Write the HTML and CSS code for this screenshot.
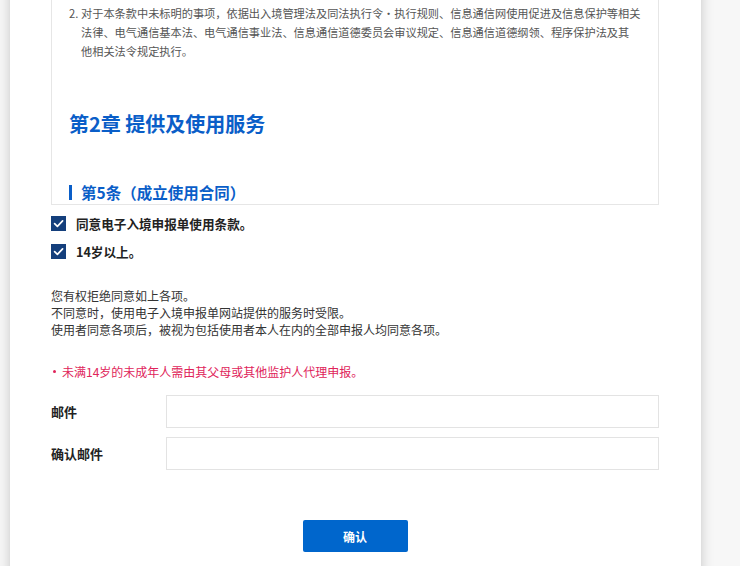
FILE: index.html
```html
<!DOCTYPE html>
<html lang="zh-CN">
<head>
<meta charset="utf-8">
<title>电子入境申报单</title>
<link rel="stylesheet" href="styles.css">
</head>
<body>
<div class="card">
  <div class="terms">
    <div class="item">
      <span class="num">2.</span>
      <span class="item-text">对于本条款中未标明的事项，依据出入境管理法及同法执行令·执行规则、信息通信网使用促进及信息保护等相关<br>法律、电气通信基本法、电气通信事业法、信息通信道德委员会审议规定、信息通信道德纲领、程序保护法及其<br>他相关法令规定执行。</span>
    </div>
    <h2 class="chapter">第2章 提供及使用服务</h2>
    <h3 class="article">第5条（成立使用合同）</h3>
  </div>

  <div class="checks">
    <label class="check-row">
      <span class="box"><svg width="15" height="15" viewBox="0 0 15 15"><path d="M3.6 7.6 L6.4 10.3 L11.6 4.9" fill="none" stroke="#fff" stroke-width="1.7" stroke-linecap="round" stroke-linejoin="round"/></svg></span>
      <span class="check-label">同意电子入境申报单使用条款。</span>
    </label>
    <label class="check-row">
      <span class="box"><svg width="15" height="15" viewBox="0 0 15 15"><path d="M3.6 7.6 L6.4 10.3 L11.6 4.9" fill="none" stroke="#fff" stroke-width="1.7" stroke-linecap="round" stroke-linejoin="round"/></svg></span>
      <span class="check-label">14岁以上。</span>
    </label>
  </div>

  <p class="notice">您有权拒绝同意如上各项。<br>不同意时，使用电子入境申报单网站提供的服务时受限。<br>使用者同意各项后，被视为包括使用者本人在内的全部申报人均同意各项。</p>

  <p class="warn"><span class="dot"></span>未满14岁的未成年人需由其父母或其他监护人代理申报。</p>

  <div class="form">
    <div class="form-row">
      <span class="form-label">邮件</span>
      <input class="field" type="text">
    </div>
    <div class="form-row">
      <span class="form-label">确认邮件</span>
      <input class="field" type="text">
    </div>
  </div>

  <div class="actions">
    <button class="btn" type="button">确认</button>
  </div>
</div>
</body>
</html>
```

FILE: styles.css
```css
html, body {
  margin: 0;
  padding: 0;
}
body {
  background: #f7f7f7;
  font-family: "Noto Sans CJK SC", "Noto Sans", sans-serif;
  color: #222;
  overflow: hidden;
}
.card {
  margin: -21px 0 0 10px;
  width: 691px;
  box-sizing: border-box;
  padding: 0 42px 60px 41px;
  background: #fff;
  box-shadow: 0 0 12px rgba(0, 0, 0, 0.2);
}
.terms {
  box-sizing: border-box;
  height: 226px;
  overflow: hidden;
  border: 1px solid #e6e6e6;
  padding: 24px 17px 0 17px;
}
.item {
  display: flex;
  font-size: 11.2px;
  line-height: 19px;
  color: #555;
}
.num {
  width: 12px;
  flex: none;
}
.item-text {
  white-space: nowrap;
}
.chapter {
  margin: 49px 0 0 0;
  font-size: 20px;
  line-height: 28px;
  font-weight: 700;
  color: #0a5ec8;
}
.article {
  margin: 43px 0 0 0;
  font-size: 15.5px;
  line-height: 22px;
  font-weight: 700;
  color: #0a5ec8;
  display: flex;
  align-items: center;
}
.article::before {
  content: "";
  width: 3px;
  height: 15px;
  background: #0a5ec8;
  margin-right: 9px;
  flex: none;
}
.checks {
  margin-top: 4px;
}
.check-row {
  display: flex;
  align-items: center;
  height: 28px;
  gap: 10px;
}
.box {
  width: 15px;
  height: 15px;
  background: #143f7c;
  display: flex;
}
.check-label {
  font-size: 12.6px;
  font-weight: 700;
  color: #222;
}
.notice {
  margin: 22px 0 0 0;
  font-size: 12px;
  line-height: 17px;
  color: #333;
}
.warn {
  margin: 25px 0 0 0;
  font-size: 12px;
  line-height: 17px;
  height: 17px;
  color: #e0245a;
  display: flex;
  align-items: center;
}
.dot {
  width: 3px;
  height: 3px;
  border-radius: 50%;
  background: #e0245a;
  margin: 0 6px 0 2px;
  flex: none;
}
.form {
  margin-top: 15px;
  display: flex;
  flex-direction: column;
  gap: 9px;
}
.form-row {
  display: flex;
  align-items: center;
}
.form-label {
  width: 115px;
  flex: none;
  font-size: 13px;
  line-height: 17px;
  font-weight: 700;
  color: #222;
  margin-top: -1px;
}
.field {
  flex: 1;
  height: 33px;
  box-sizing: border-box;
  border: 1px solid #e3e3e3;
  margin: 0;
  padding: 0 10px;
  background: #fff;
  outline: none;
}
.actions {
  margin-top: 50px;
  display: flex;
  justify-content: center;
}
.btn {
  width: 105px;
  height: 32px;
  border: none;
  border-radius: 2px;
  background: #0066cc;
  color: #fff;
  font-family: "Noto Sans CJK SC", "Noto Sans", sans-serif;
  font-size: 12px;
  font-weight: 700;
  cursor: pointer;
}
```
